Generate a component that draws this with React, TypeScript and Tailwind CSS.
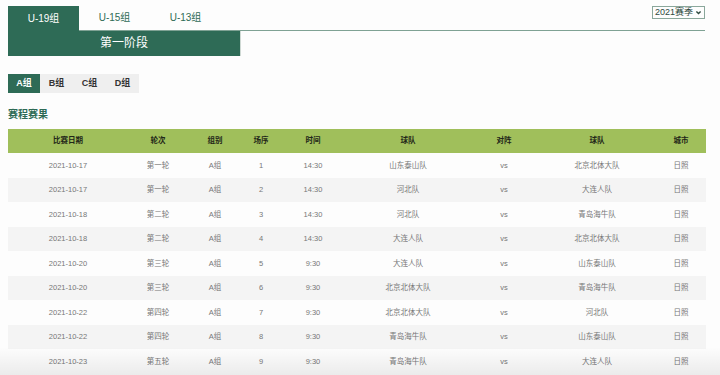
import { useState } from 'react';

type Match = {
    date: string;
    round: string;
    group: string;
    no: number;
    time: string;
    home: string;
    away: string;
    city: string;
};

const matches: Match[] = [
    { date: '2021-10-17', round: '第一轮', group: 'A组', no: 1, time: '14:30', home: '山东泰山队', away: '北京北体大队', city: '日照' },
    { date: '2021-10-17', round: '第一轮', group: 'A组', no: 2, time: '14:30', home: '河北队', away: '大连人队', city: '日照' },
    { date: '2021-10-18', round: '第二轮', group: 'A组', no: 3, time: '14:30', home: '河北队', away: '青岛海牛队', city: '日照' },
    { date: '2021-10-18', round: '第二轮', group: 'A组', no: 4, time: '14:30', home: '大连人队', away: '北京北体大队', city: '日照' },
    { date: '2021-10-20', round: '第三轮', group: 'A组', no: 5, time: '9:30', home: '大连人队', away: '山东泰山队', city: '日照' },
    { date: '2021-10-20', round: '第三轮', group: 'A组', no: 6, time: '9:30', home: '北京北体大队', away: '青岛海牛队', city: '日照' },
    { date: '2021-10-22', round: '第四轮', group: 'A组', no: 7, time: '9:30', home: '北京北体大队', away: '河北队', city: '日照' },
    { date: '2021-10-22', round: '第四轮', group: 'A组', no: 8, time: '9:30', home: '青岛海牛队', away: '山东泰山队', city: '日照' },
    { date: '2021-10-23', round: '第五轮', group: 'A组', no: 9, time: '9:30', home: '青岛海牛队', away: '大连人队', city: '日照' },
];

const headers = ['比赛日期', '轮次', '组别', '场序', '时间', '球队', '对阵', '球队', '城市'];
const ageTabs = ['U-19组', 'U-15组', 'U-13组'];
const groups = ['A组', 'B组', 'C组', 'D组'];

const cols = 'grid grid-cols-[120px_60px_54px_38px_66px_124px_68px_118px_50px]';

export default function App() {
    const [age, setAge] = useState('U-19组');
    const [group, setGroup] = useState('A组');

    return (
        <div
            className="relative w-[720px] h-[375px] overflow-hidden bg-[#fdfdfd] pl-2 pt-[6px]"
            style={{ fontFamily: '"Liberation Sans", "Noto Sans CJK SC", sans-serif' }}
        >
            {/* age tabs + season select */}
            <div className="flex w-[697px] items-start">
                {ageTabs.map((tab) => (
                    <button
                        key={tab}
                        onClick={() => setAge(tab)}
                        className={
                            age === tab
                                ? 'w-[71px] h-[25px] bg-[#2e6b56] text-white text-[10px] leading-[25px] pb-[1px]'
                                : 'w-[71px] h-[25px] border-b border-[#7fa294] text-[#2e6b56] text-[10px] leading-[24px]'
                        }
                    >
                        {tab}
                    </button>
                ))}
                <div className="flex-1 h-[25px] border-b border-[#7fa294] flex justify-end items-start">
                    <div className="flex items-center gap-[2px] h-[13px] border border-[#8aa79b] px-[2px] text-[9px] leading-none text-[#2e4a40]">
                        <span>2021赛季</span>
                        <svg width="7" height="7" viewBox="0 0 10 10" fill="none" stroke="#2e4a40" strokeWidth="2">
                            <path d="M2 3.5 L5 6.5 L8 3.5" />
                        </svg>
                    </div>
                </div>
            </div>

            {/* stage bar */}
            <div className="w-[232px] h-[25px] bg-[#2e6b56] text-white text-[12px] leading-[25px] text-center shadow-[1px_0_0_#cfd9d4]">
                第一阶段
            </div>

            {/* group tabs */}
            <div className="flex mt-[18px] h-[19px]">
                {groups.map((g) => (
                    <button
                        key={g}
                        onClick={() => setGroup(g)}
                        className={
                            group === g
                                ? 'w-[32px] h-[19px] bg-[#2e6b56] text-white text-[9px] font-bold'
                                : 'w-[33px] h-[19px] bg-[#efefef] text-[#333] text-[9px] font-bold'
                        }
                    >
                        {g}
                    </button>
                ))}
            </div>

            <div className="mt-[17px] text-[10px] font-bold text-[#2e6b56] leading-none">赛程赛果</div>

            {/* table */}
            <div className="mt-[9px] w-[698px]">
                <div className={`${cols} h-[24px] bg-[#a0bf5b] text-[7.5px] font-bold text-[#1f2618] items-center text-center`}>
                    {headers.map((h, i) => (
                        <div key={i}>{h}</div>
                    ))}
                </div>
                {matches.map((m, i) => (
                    <div
                        key={m.no}
                        className={`${cols} h-[24.5px] items-center text-center text-[7.5px] text-[#777] ${
                            i % 2 === 1 ? 'bg-[#f4f4f4]' : 'bg-[#fdfdfd]'
                        }`}
                    >
                        <div>{m.date}</div>
                        <div>{m.round}</div>
                        <div>{m.group}</div>
                        <div>{m.no}</div>
                        <div>{m.time}</div>
                        <div>{m.home}</div>
                        <div>vs</div>
                        <div>{m.away}</div>
                        <div>{m.city}</div>
                    </div>
                ))}
            </div>

            {/* bottom fade overlay */}
            <div className="pointer-events-none absolute left-0 right-0 bottom-0 h-[28px] bg-gradient-to-b from-transparent to-[rgba(0,0,0,0.07)]" />
        </div>
    );
}
